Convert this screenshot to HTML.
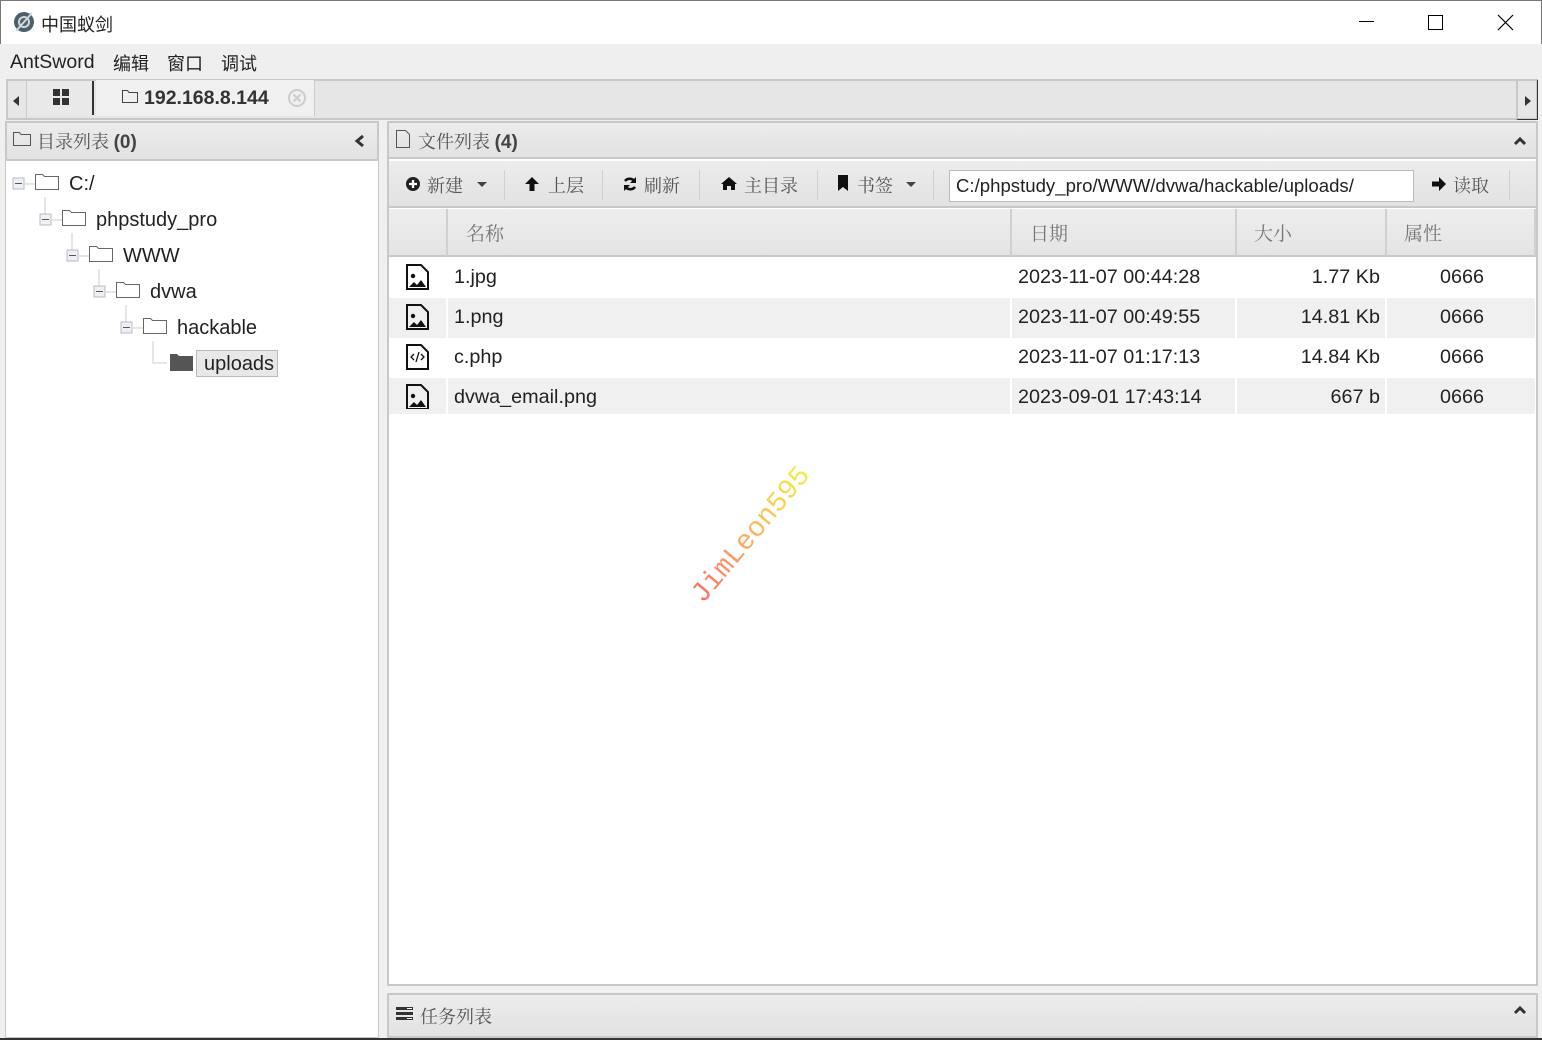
<!DOCTYPE html>
<html><head><meta charset="utf-8"><style>
*{box-sizing:border-box;margin:0;padding:0}
body{width:1542px;height:1040px;position:relative;overflow:hidden;background:#f0f0f0;font-family:"Liberation Sans","Noto Sans CJK SC",sans-serif;color:#222}
.a{position:absolute}
.cn{font-family:"Noto Serif CJK SC","Noto Sans CJK SC",serif}
.hd{background:linear-gradient(#ececec,#e2e2e2);border:1px solid #c8c8c8}
.tb{font-size:17px;color:#555}
.row{position:absolute;left:389px;width:1146px;height:40px;font-size:19.8px;color:#222}
.row span{position:absolute;top:8px}
.g{background:#f0f0f0}
</style></head><body>
<div class="a" style="left:0;top:0;width:1542px;height:44px;background:#fff;border:1px solid #777;border-bottom:none"></div>
<svg class="a" style="left:13px;top:11px" width="22" height="22" viewBox="0 0 22 22"><circle cx="11" cy="11" r="10" fill="#4d5f6b"/><circle cx="11" cy="11" r="5" fill="none" stroke="#cfd8dc" stroke-width="2"/><line x1="3" y1="20" x2="19" y2="2" stroke="#cfd8dc" stroke-width="2"/></svg>
<div class="a" style="left:41px;top:11px;font-size:18px">中国蚁剑</div>
<div class="a" style="left:1359px;top:21px;width:15px;height:1px;background:#000"></div>
<div class="a" style="left:1428px;top:15px;width:15px;height:15px;border:1px solid #000"></div>
<svg class="a" style="left:1497px;top:14px" width="17" height="17"><path d="M1 1L16 16M16 1L1 16" stroke="#000" stroke-width="1.2"/></svg>
<div class="a" style="left:0;top:44px;width:1542px;height:34px;background:#efefef"></div>
<div class="a" style="left:10px;top:51px;font-size:19.5px">AntSword</div>
<div class="a" style="left:113px;top:50px;font-size:18px">编辑</div>
<div class="a" style="left:167px;top:50px;font-size:18px">窗口</div>
<div class="a" style="left:221px;top:50px;font-size:18px">调试</div>
<div class="a" style="left:6px;top:79px;width:1532px;height:41px;background:#e6e6e6;border:2px solid #c8c8c8"></div>
<div class="a" style="left:6px;top:80px;width:21px;height:38px;border-right:1px solid #ccc"></div>
<div class="a" style="left:13px;top:96px;width:0;height:0;border-top:5px solid transparent;border-bottom:5px solid transparent;border-right:6px solid #333"></div>
<div class="a" style="left:28px;top:81px;width:66px;height:34px;background:#e9e9e9;border-right:2px solid #333"></div>
<svg class="a" style="left:53px;top:89px" width="16" height="16"><rect x="0" y="0" width="7" height="7" fill="#333"/><rect x="9" y="0" width="7" height="7" fill="#333"/><rect x="0" y="9" width="7" height="7" fill="#333"/><rect x="9" y="9" width="7" height="7" fill="#333"/></svg>
<div class="a" style="left:96px;top:80px;width:219px;height:36px;background:#f0f0f0;border-right:1px solid #ccc"></div>
<svg class="a" style="left:122px;top:89px" width="16" height="14"><path d="M0.5 1.5h5l1.5 2h8.5v10h-15z" fill="none" stroke="#444"/></svg>
<div class="a" style="left:144px;top:87px;font-size:19.5px;font-weight:bold;color:#333">192.168.8.144</div>
<svg class="a" style="left:287px;top:88px" width="20" height="20"><circle cx="10" cy="10" r="8" fill="none" stroke="#ccc" stroke-width="2"/><path d="M6.5 6.5l7 7M13.5 6.5l-7 7" stroke="#ccc" stroke-width="2"/></svg>
<div class="a" style="left:1516px;top:80px;width:22px;height:40px;border-left:2px solid #c8c8c8;border-bottom:1px solid #333;border-right:1px solid #333"></div>
<div class="a" style="left:1525px;top:96px;width:0;height:0;border-top:5px solid transparent;border-bottom:5px solid transparent;border-left:6px solid #333"></div>
<div class="a" style="left:5px;top:121px;width:374px;height:917px;background:#fff;border:1px solid #c8c8c8"></div>
<div class="a hd" style="left:5px;top:121px;width:374px;height:40px;border-width:2px"></div>
<svg class="a" style="left:13px;top:131px" width="18" height="16"><path d="M0.5 1.5h6l1.5 2h9.5v11h-17z" fill="none" stroke="#555"/></svg>
<div class="a cn" style="left:37px;top:128px;font-size:18px;color:#555">目录列表 <b style="font-family:'Liberation Sans';color:#444;font-size:19px">(0)</b></div>
<svg class="a" style="left:354px;top:134px" width="12" height="14"><path d="M9 2L3 7l6 5" fill="none" stroke="#333" stroke-width="3"/></svg>
<svg class="a" style="left:10px;top:165px" width="200" height="220">
<g fill="none" stroke="#ccc">
<path d="M35 32v18M62 68v18M89 104v18M116 140v18M143 176v22h14"/>
<path d="M15 19h10M42 55h10M69 91h10M96 127h10M123 163h10"/>
</g>
<g fill="#eef0f2" stroke="#b5bcc4"><rect x="3" y="13" width="11" height="11"/><rect x="30" y="49" width="11" height="11"/><rect x="57" y="85" width="11" height="11"/><rect x="84" y="121" width="11" height="11"/><rect x="111" y="157" width="11" height="11"/></g>
<g stroke="#556"><path d="M5 18.5h7M32 54.5h7M59 90.5h7M86 126.5h7M113 162.5h7"/></g>
<g fill="#fff" stroke="#666"><path d="M25.5 9.5h7l2 2h14v13h-23z"/><path d="M52.5 45.5h7l2 2h14v13h-23z"/><path d="M79.5 81.5h7l2 2h14v13h-23z"/><path d="M106.5 117.5h7l2 2h14v13h-23z"/><path d="M133.5 153.5h7l2 2h14v13h-23z"/></g>
<path d="M160 189h7l2 2h14v15h-23z" fill="#555"/>
</svg>
<div class="a" style="left:69px;top:173px;font-size:20px">C:/</div>
<div class="a" style="left:96px;top:209px;font-size:20px">phpstudy_pro</div>
<div class="a" style="left:123px;top:245px;font-size:20px">WWW</div>
<div class="a" style="left:150px;top:281px;font-size:20px">dvwa</div>
<div class="a" style="left:177px;top:317px;font-size:20px">hackable</div>
<div class="a" style="left:196px;top:350px;width:82px;height:27px;background:#e8e8e8;border:1px solid #bbb"></div>
<div class="a" style="left:204px;top:353px;font-size:20px">uploads</div>
<div class="a" style="left:387px;top:121px;width:1151px;height:865px;background:#fff;border:2px solid #c8c8c8"></div>
<div class="a hd" style="left:387px;top:121px;width:1151px;height:38px;border-width:2px"></div>
<svg class="a" style="left:396px;top:130px" width="14" height="18"><path d="M0.5 0.5h9l4 4v13h-13z" fill="none" stroke="#555"/></svg>
<div class="a cn" style="left:418px;top:128px;font-size:18px;color:#555">文件列表 <b style="font-family:'Liberation Sans';color:#444;font-size:19px">(4)</b></div>
<svg class="a" style="left:1513px;top:136px" width="14" height="10"><path d="M2 8l5-5 5 5" fill="none" stroke="#333" stroke-width="3"/></svg>
<div class="a hd" style="left:389px;top:161px;width:1147px;height:47px;border-width:0 0 2px 0"></div>
<svg class="a" style="left:406px;top:177px" width="14" height="14"><circle cx="7" cy="7" r="7" fill="#222"/><path d="M7 3v8M3 7h8" stroke="#fff" stroke-width="2.2"/></svg>
<div class="a cn tb" style="left:427px;top:172px;font-size:18px">新建</div>
<div class="a" style="left:477px;top:182px;border-left:5px solid transparent;border-right:5px solid transparent;border-top:5px solid #444"></div>
<div class="a" style="left:504px;top:170px;width:1px;height:30px;background:#c9d2dc"></div>
<svg class="a" style="left:524px;top:176px" width="16" height="16"><path d="M8 1L1 8h4.5v7h5V8H15z" fill="#111"/></svg>
<div class="a cn tb" style="left:548px;top:172px;font-size:18px">上层</div>
<div class="a" style="left:602px;top:170px;width:1px;height:30px;background:#c9d2dc"></div>
<svg class="a" style="left:622px;top:176px" width="16" height="16"><path d="M13 6A6 6 0 0 0 3 5M3 10a6 6 0 0 0 10 1" fill="none" stroke="#111" stroke-width="2.6"/><path d="M14 1v6H8zM2 15V9h6z" fill="#111"/></svg>
<div class="a cn tb" style="left:644px;top:172px;font-size:18px">刷新</div>
<div class="a" style="left:699px;top:170px;width:1px;height:30px;background:#c9d2dc"></div>
<svg class="a" style="left:720px;top:176px" width="18" height="14"><path d="M9 1L1 8h2v6h4V10h4v4h4V8h2z" fill="#111"/></svg>
<div class="a cn tb" style="left:744px;top:172px;font-size:18px">主目录</div>
<div class="a" style="left:817px;top:170px;width:1px;height:30px;background:#c9d2dc"></div>
<svg class="a" style="left:837px;top:175px" width="12" height="16"><path d="M1 0h10v16l-5-4-5 4z" fill="#111"/></svg>
<div class="a cn tb" style="left:857px;top:172px;font-size:18px">书签</div>
<div class="a" style="left:906px;top:182px;border-left:5px solid transparent;border-right:5px solid transparent;border-top:5px solid #444"></div>
<div class="a" style="left:933px;top:170px;width:1px;height:30px;background:#c9d2dc"></div>
<div class="a" style="left:949px;top:170px;width:465px;height:32px;background:#fff;border:1px solid #bbb"></div>
<div class="a" style="left:956px;top:175px;font-size:18.6px">C:/phpstudy_pro/WWW/dvwa/hackable/uploads/</div>
<svg class="a" style="left:1431px;top:176px" width="16" height="16"><path d="M15 8L8 1v4.5H1v5h7V15z" fill="#111"/></svg>
<div class="a cn tb" style="left:1453px;top:172px;font-size:18px">读取</div>
<div class="a" style="left:1509px;top:170px;width:1px;height:30px;background:#c9d2dc"></div>
<div class="a" style="left:389px;top:209px;width:1147px;height:48px;background:linear-gradient(#eeeeee,#e4e4e4);border-bottom:2px solid #c8c8c8"></div>
<div class="a" style="left:446px;top:209px;width:2px;height:47px;background:#d0d0d0"></div>
<div class="a" style="left:1010px;top:209px;width:2px;height:47px;background:#d0d0d0"></div>
<div class="a" style="left:1235px;top:209px;width:2px;height:47px;background:#d0d0d0"></div>
<div class="a" style="left:1385px;top:209px;width:2px;height:47px;background:#d0d0d0"></div>
<div class="a" style="left:1534px;top:209px;width:2px;height:47px;background:#d0d0d0"></div>
<div class="a cn" style="left:466px;top:219px;font-size:19px;color:#777">名称</div>
<div class="a cn" style="left:1030px;top:219px;font-size:19px;color:#777">日期</div>
<div class="a cn" style="left:1254px;top:219px;font-size:19px;color:#777">大小</div>
<div class="a cn" style="left:1404px;top:219px;font-size:19px;color:#777">属性</div>
<div class="row" style="top:258px"><span style="left:65px">1.jpg</span><span style="left:629px">2023-11-07 00:44:28</span><span style="right:155px">1.77 Kb</span><span style="left:1051px">0666</span></div>
<div class="row g" style="top:298px"><span style="left:65px">1.png</span><span style="left:629px">2023-11-07 00:49:55</span><span style="right:155px">14.81 Kb</span><span style="left:1051px">0666</span></div>
<div class="row" style="top:338px"><span style="left:65px">c.php</span><span style="left:629px">2023-11-07 01:17:13</span><span style="right:155px">14.84 Kb</span><span style="left:1051px">0666</span></div>
<div class="row g" style="top:378px;height:36px"><span style="left:65px">dvwa_email.png</span><span style="left:629px">2023-09-01 17:43:14</span><span style="right:155px">667 b</span><span style="left:1051px">0666</span></div>
<div class="a" style="left:446px;top:298px;width:2px;height:40px;background:#fff"></div>
<div class="a" style="left:1010px;top:298px;width:2px;height:40px;background:#fff"></div>
<div class="a" style="left:1235px;top:298px;width:2px;height:40px;background:#fff"></div>
<div class="a" style="left:1385px;top:298px;width:2px;height:40px;background:#fff"></div>
<div class="a" style="left:446px;top:378px;width:2px;height:36px;background:#fff"></div>
<div class="a" style="left:1010px;top:378px;width:2px;height:36px;background:#fff"></div>
<div class="a" style="left:1235px;top:378px;width:2px;height:36px;background:#fff"></div>
<div class="a" style="left:1385px;top:378px;width:2px;height:36px;background:#fff"></div>
<svg class="a" style="left:406px;top:264px" width="24" height="145">
<g fill="none" stroke="#111" stroke-width="2"><path d="M1 1h14l7 7v17H1z"/><path d="M1 41h14l7 7v17H1z"/><path d="M1 81h14l7 7v17H1z"/><path d="M1 121h14l7 7v17H1z"/></g>
<g fill="#111"><circle cx="7" cy="12" r="2.2"/><path d="M3 23l5-5 3 3 4-5 5 7z"/><circle cx="7" cy="52" r="2.2"/><path d="M3 63l5-5 3 3 4-5 5 7z"/><circle cx="7" cy="132" r="2.2"/><path d="M3 143l5-5 3 3 4-5 5 7z"/></g>
<path d="M8 90l-3 3 3 3M15 90l3 3-3 3M13 88l-3 10" fill="none" stroke="#111" stroke-width="1.3"/>
</svg>
<div class="a" style="left:686px;top:590px;transform:rotate(-50deg);transform-origin:left top;font-family:'Liberation Mono',monospace;font-size:28px;background:linear-gradient(90deg,#ff6a6a,#ffb060,#f0f040);-webkit-background-clip:text;color:transparent">JimLeon595</div>
<div class="a hd" style="left:387px;top:993px;width:1151px;height:45px;border-width:2px"></div>
<svg class="a" style="left:396px;top:1007px" width="17" height="14"><rect y="0" width="17" height="3" fill="#333"/><rect y="5" width="17" height="3" fill="#333"/><rect y="10" width="17" height="3" fill="#333"/><rect x="11" y="1" width="5" height="1" fill="#fff"/><rect x="11" y="11" width="5" height="1" fill="#fff"/></svg>
<div class="a cn" style="left:420px;top:1003px;font-size:18px;color:#555">任务列表</div>
<svg class="a" style="left:1513px;top:1005px" width="14" height="10"><path d="M2 8l5-5 5 5" fill="none" stroke="#333" stroke-width="3"/></svg>
<div class="a" style="left:0;top:1038px;width:1542px;height:2px;background:#333"></div>
</body></html>
